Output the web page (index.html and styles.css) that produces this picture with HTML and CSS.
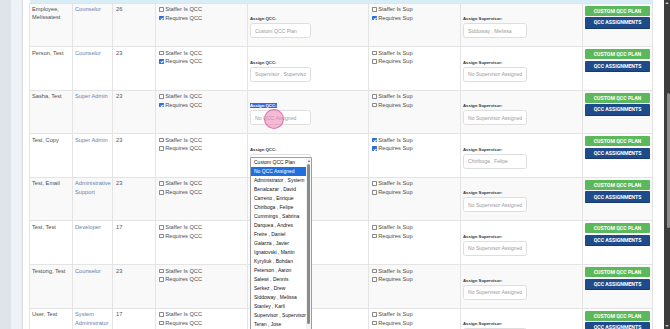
FILE: index.html
```html
<!DOCTYPE html>
<html lang="en">
<head>
  <meta charset="UTF-8" />
  <meta name="viewport" content="width=device-width, initial-scale=1.0"/>
  <title>Staff QCC Assignments</title>
  <link rel="stylesheet" href="styles.css">
</head>
<body>
  <div class="shell">
    <aside class="rail"></aside>
    <main class="content">
      <div class="card">
        <table class="staff">
          <colgroup>
            <col style="width:43px"><col style="width:40px"><col style="width:43px"><col style="width:92px">
            <col style="width:121px"><col style="width:92px"><col style="width:122px"><col style="width:70px">
          </colgroup>
          <thead>
            <tr><th colspan="8"></th></tr>
          </thead>
          <tbody>
            <tr>
              <td class="name">Employee, Melissatest</td>
              <td class="role"><a href="#">Counselor</a></td>
              <td class="num">26</td>
              <td class="checks">
                <label><input type="checkbox"> Staffer Is QCC</label>
                <label><input type="checkbox" checked> Requires QCC</label>
              </td>
              <td><div class="assign"><span class="lbl">Assign QCC:</span><input class="field" type="text" readonly value="Custom QCC Plan"></div></td>
              <td class="checks">
                <label><input type="checkbox"> Staffer Is Sup</label>
                <label><input type="checkbox" checked> Requires Sup</label>
              </td>
              <td><div class="assign"><span class="lbl">Assign Supervisor:</span><input class="field wide" type="text" readonly value="Siddoway , Melissa"></div></td>
              <td class="actions"><button class="btn plan">CUSTOM QCC PLAN</button><button class="btn assigns">QCC ASSIGNMENTS</button></td>
            </tr>
            <tr>
              <td class="name">Person, Test</td>
              <td class="role"><a href="#">Counselor</a></td>
              <td class="num">23</td>
              <td class="checks">
                <label><input type="checkbox"> Staffer Is QCC</label>
                <label><input type="checkbox" checked> Requires QCC</label>
              </td>
              <td><div class="assign"><span class="lbl">Assign QCC:</span><input class="field" type="text" readonly value="Supervisor , Supervisor"></div></td>
              <td class="checks">
                <label><input type="checkbox"> Staffer Is Sup</label>
                <label><input type="checkbox"> Requires Sup</label>
              </td>
              <td><div class="assign"><span class="lbl">Assign Supervisor:</span><input class="field wide" type="text" readonly value="No Supervisor Assigned"></div></td>
              <td class="actions"><button class="btn plan">CUSTOM QCC PLAN</button><button class="btn assigns">QCC ASSIGNMENTS</button></td>
            </tr>
            <tr>
              <td class="name">Sasha, Test</td>
              <td class="role"><a href="#">Super Admin</a></td>
              <td class="num">23</td>
              <td class="checks">
                <label><input type="checkbox"> Staffer Is QCC</label>
                <label><input type="checkbox" checked> Requires QCC</label>
              </td>
              <td>
                <div class="assign">
                  <span class="lbl"><span class="picked">Assign QCC:</span></span>
                  <input class="field" type="text" readonly value="No QCC Assigned">
                  <span class="touch"></span>
                </div>
              </td>
              <td class="checks">
                <label><input type="checkbox"> Staffer Is Sup</label>
                <label><input type="checkbox"> Requires Sup</label>
              </td>
              <td><div class="assign"><span class="lbl">Assign Supervisor:</span><input class="field wide" type="text" readonly value="No Supervisor Assigned"></div></td>
              <td class="actions"><button class="btn plan">CUSTOM QCC PLAN</button><button class="btn assigns">QCC ASSIGNMENTS</button></td>
            </tr>
            <tr>
              <td class="name">Test, Copy</td>
              <td class="role"><a href="#">Super Admin</a></td>
              <td class="num">23</td>
              <td class="checks">
                <label><input type="checkbox"> Staffer Is QCC</label>
                <label><input type="checkbox"> Requires QCC</label>
              </td>
              <td>
                <div class="assign">
                  <span class="lbl">Assign QCC:</span>
                  <input class="field" type="text" readonly value="">
                  <div class="listbox">
                    <ul class="options">
                      <li>Custom QCC Plan</li>
                      <li class="active">No QCC Assigned</li>
                      <li>Administrator , System</li>
                      <li>Benalcazar , David</li>
                      <li>Carreno , Enrique</li>
                      <li>Chiriboga , Felipe</li>
                      <li>Cummings , Sabrina</li>
                      <li>Darquea , Andres</li>
                      <li>Freire , Daniel</li>
                      <li>Galarza , Javier</li>
                      <li>Ignatovski , Martin</li>
                      <li>Kyryliuk , Bohdan</li>
                      <li>Peterson , Aaron</li>
                      <li>Salewi , Dennis</li>
                      <li>Serkez , Drew</li>
                      <li>Siddoway , Melissa</li>
                      <li>Stanley , Karli</li>
                      <li>Supervisor , Supervisor</li>
                      <li>Teran , Jose</li>
                    </ul>
                    <div class="list-scroll"><span class="up"></span><span class="bar"></span></div>
                  </div>
                </div>
              </td>
              <td class="checks">
                <label><input type="checkbox" checked> Staffer Is Sup</label>
                <label><input type="checkbox" checked> Requires Sup</label>
              </td>
              <td><div class="assign"><span class="lbl">Assign Supervisor:</span><input class="field wide" type="text" readonly value="Chiriboga , Felipe"></div></td>
              <td class="actions"><button class="btn plan">CUSTOM QCC PLAN</button><button class="btn assigns">QCC ASSIGNMENTS</button></td>
            </tr>
            <tr>
              <td class="name">Test, Email</td>
              <td class="role"><a href="#">Administrative Support</a></td>
              <td class="num">23</td>
              <td class="checks">
                <label><input type="checkbox"> Staffer Is QCC</label>
                <label><input type="checkbox"> Requires QCC</label>
              </td>
              <td><div class="assign"><span class="lbl hidden">Assign QCC:</span><input class="field" type="text" readonly value=""></div></td>
              <td class="checks">
                <label><input type="checkbox"> Staffer Is Sup</label>
                <label><input type="checkbox"> Requires Sup</label>
              </td>
              <td><div class="assign"><span class="lbl">Assign Supervisor:</span><input class="field wide" type="text" readonly value="No Supervisor Assigned"></div></td>
              <td class="actions"><button class="btn plan">CUSTOM QCC PLAN</button><button class="btn assigns">QCC ASSIGNMENTS</button></td>
            </tr>
            <tr>
              <td class="name">Test, Test</td>
              <td class="role"><a href="#">Developer</a></td>
              <td class="num">17</td>
              <td class="checks">
                <label><input type="checkbox"> Staffer Is QCC</label>
                <label><input type="checkbox"> Requires QCC</label>
              </td>
              <td><div class="assign"><span class="lbl hidden">Assign QCC:</span><input class="field" type="text" readonly value=""></div></td>
              <td class="checks">
                <label><input type="checkbox"> Staffer Is Sup</label>
                <label><input type="checkbox"> Requires Sup</label>
              </td>
              <td><div class="assign"><span class="lbl">Assign Supervisor:</span><input class="field wide" type="text" readonly value="No Supervisor Assigned"></div></td>
              <td class="actions"><button class="btn plan">CUSTOM QCC PLAN</button><button class="btn assigns">QCC ASSIGNMENTS</button></td>
            </tr>
            <tr>
              <td class="name">Testong, Test</td>
              <td class="role"><a href="#">Counselor</a></td>
              <td class="num">23</td>
              <td class="checks">
                <label><input type="checkbox"> Staffer Is QCC</label>
                <label><input type="checkbox"> Requires QCC</label>
              </td>
              <td><div class="assign"><span class="lbl hidden">Assign QCC:</span><input class="field" type="text" readonly value=""></div></td>
              <td class="checks">
                <label><input type="checkbox"> Staffer Is Sup</label>
                <label><input type="checkbox"> Requires Sup</label>
              </td>
              <td><div class="assign"><span class="lbl">Assign Supervisor:</span><input class="field wide" type="text" readonly value="No Supervisor Assigned"></div></td>
              <td class="actions"><button class="btn plan">CUSTOM QCC PLAN</button><button class="btn assigns">QCC ASSIGNMENTS</button></td>
            </tr>
            <tr>
              <td class="name">User, Test</td>
              <td class="role"><a href="#">System Administrator</a></td>
              <td class="num">17</td>
              <td class="checks">
                <label><input type="checkbox"> Staffer Is QCC</label>
                <label><input type="checkbox"> Requires QCC</label>
              </td>
              <td><div class="assign"><span class="lbl hidden">Assign QCC:</span><input class="field" type="text" readonly value=""></div></td>
              <td class="checks">
                <label><input type="checkbox"> Staffer Is Sup</label>
                <label><input type="checkbox"> Requires Sup</label>
              </td>
              <td><div class="assign"><span class="lbl">Assign Supervisor:</span><input class="field wide" type="text" readonly value="No Supervisor Assigned"></div></td>
              <td class="actions"><button class="btn plan">CUSTOM QCC PLAN</button><button class="btn assigns">QCC ASSIGNMENTS</button></td>
            </tr>
          </tbody>
        </table>
      </div>
    </main>
    <div class="scrollbar">
      <span class="arrow up"></span>
      <div class="track"><span class="thumb"></span></div>
      <span class="arrow down"></span>
    </div>
  </div>
</body>
</html>
```

FILE: styles.css
```css
* {
  margin: 0;
  padding: 0;
  box-sizing: border-box;
}
html, body {
  width: 100%;
  height: 100%;
  overflow: hidden;
  background: #eef1f5;
  font-family: "Liberation Sans", Arial, sans-serif;
  color: #555;
}
.shell {
  display: flex;
  height: 329px;
  overflow: hidden;
}
.rail {
  width: 11px;
  flex: none;
  background: #dfe3ea;
}
.content {
  flex: 1;
  padding-left: 11px;
  background: #eef1f5;
  min-width: 0;
}
.card {
  background: #fff;
  border-left: 1px solid #d5d9df;
  padding: 0 12px 0 6px;
  height: 100%;
}
.staff {
  width: 623px;
  table-layout: fixed;
  border-collapse: collapse;
}
.staff thead th {
  height: 3px;
  padding: 0;
  background: #d9edf7;
}
.staff tbody tr {
  height: 43.6px;
}
.staff tbody tr:nth-child(odd) {
  background: #f9f9f9;
}
.staff td {
  border: 1px solid #e4e4e4;
  vertical-align: top;
  padding: 1.5px 2px 0;
  font-size: 5.7px;
  line-height: 8.4px;
}
.name {
  color: #4d4d4d;
}
.role a {
  color: #6781b0;
  text-decoration: none;
}
.num {
  padding-left: 3px !important;
}
.checks {
  padding-left: 3px !important;
}
.checks label {
  display: flex;
  align-items: center;
  gap: 1.6px;
  height: 8.6px;
  color: #4d4d4d;
}
.checks input {
  appearance: none;
  -webkit-appearance: none;
  position: relative;
  flex: none;
  width: 4.6px;
  height: 4.6px;
  margin: 0;
  border: 0.6px solid #8a8a8a;
  border-radius: 0.8px;
  background: #fff;
}
.checks input:checked {
  background: #2a6fd8;
  border-color: #2a6fd8;
}
.checks input:checked::after {
  content: "";
  position: absolute;
  left: 1.1px;
  top: 0.2px;
  width: 1.1px;
  height: 2.2px;
  border: solid #fff;
  border-width: 0 0.7px 0.7px 0;
  transform: rotate(45deg);
}
.assign {
  position: relative;
  padding-top: 11px;
}
.lbl {
  display: block;
  height: 5px;
  margin-bottom: 2px;
  font-size: 4.3px;
  line-height: 5px;
  font-weight: bold;
  color: #333;
}
.lbl.hidden {
  visibility: hidden;
}
.picked {
  background: #3b6ad6;
  color: #fff;
}
.field {
  display: block;
  width: 61px;
  height: 15px;
  padding: 0 4px;
  border: 1px solid #dedede;
  border-radius: 2.5px;
  background: #fff;
  font-family: inherit;
  font-size: 5.1px;
  color: #9a9a9a;
  outline: none;
}
.field.wide {
  width: 64px;
}
.touch {
  position: absolute;
  left: 14px;
  top: 17px;
  width: 20px;
  height: 20px;
  border-radius: 50%;
  background: rgba(236, 132, 180, 0.55);
  border: 1px solid rgba(214, 80, 150, 0.7);
}
.listbox {
  position: absolute;
  left: 0;
  top: 21.5px;
  z-index: 5;
  display: flex;
  width: 62px;
  height: 176px;
  background: #fff;
  border: 1px solid #9d9d9d;
  border-bottom: none;
  border-radius: 1.5px 1.5px 0 0;
}
.options {
  list-style: none;
  flex: 1;
}
.options li {
  height: 9px;
  padding-left: 3px;
  font-size: 5px;
  line-height: 9px;
  color: #111;
  white-space: nowrap;
  overflow: hidden;
}
.options li.active {
  background: #1f6fde;
  color: #fff;
}
.list-scroll {
  width: 5px;
  flex: none;
  display: flex;
  flex-direction: column;
  align-items: center;
  background: #f4f4f4;
}
.list-scroll .up {
  margin-top: 2px;
  border-left: 1.5px solid transparent;
  border-right: 1.5px solid transparent;
  border-bottom: 2px solid #555;
}
.list-scroll .bar {
  margin-top: 2px;
  width: 3px;
  height: 160px;
  border-radius: 1.5px;
  background: #8a8a8a;
}
.actions {
  padding-top: 2px !important;
}
.btn {
  display: block;
  width: 65px;
  border: none;
  border-radius: 1px;
  font-family: Roboto, "Liberation Sans", sans-serif;
  font-weight: bold;
  font-size: 5.2px;
  color: #fff;
  text-align: center;
}
.plan {
  height: 10px;
  background: #5cb85c;
}
.assigns {
  height: 11.5px;
  margin-top: 1.5px;
  background: #1f4b8a;
  border-bottom: 1px solid #173a6c;
}
.scrollbar {
  width: 6px;
  flex: none;
  display: flex;
  flex-direction: column;
  align-items: center;
  background: #3c3c3c;
}
.scrollbar .arrow {
  margin: 2px 0;
  border-left: 2px solid transparent;
  border-right: 2px solid transparent;
}
.scrollbar .arrow.up {
  border-bottom: 2.5px solid #bbb;
}
.scrollbar .arrow.down {
  border-top: 2.5px solid #bbb;
}
.track {
  flex: 1;
  width: 100%;
  display: flex;
  justify-content: flex-end;
}
.thumb {
  width: 3px;
  height: 135px;
  margin-top: 87px;
  border-radius: 1.5px;
  background: #8d8d8d;
}
```
